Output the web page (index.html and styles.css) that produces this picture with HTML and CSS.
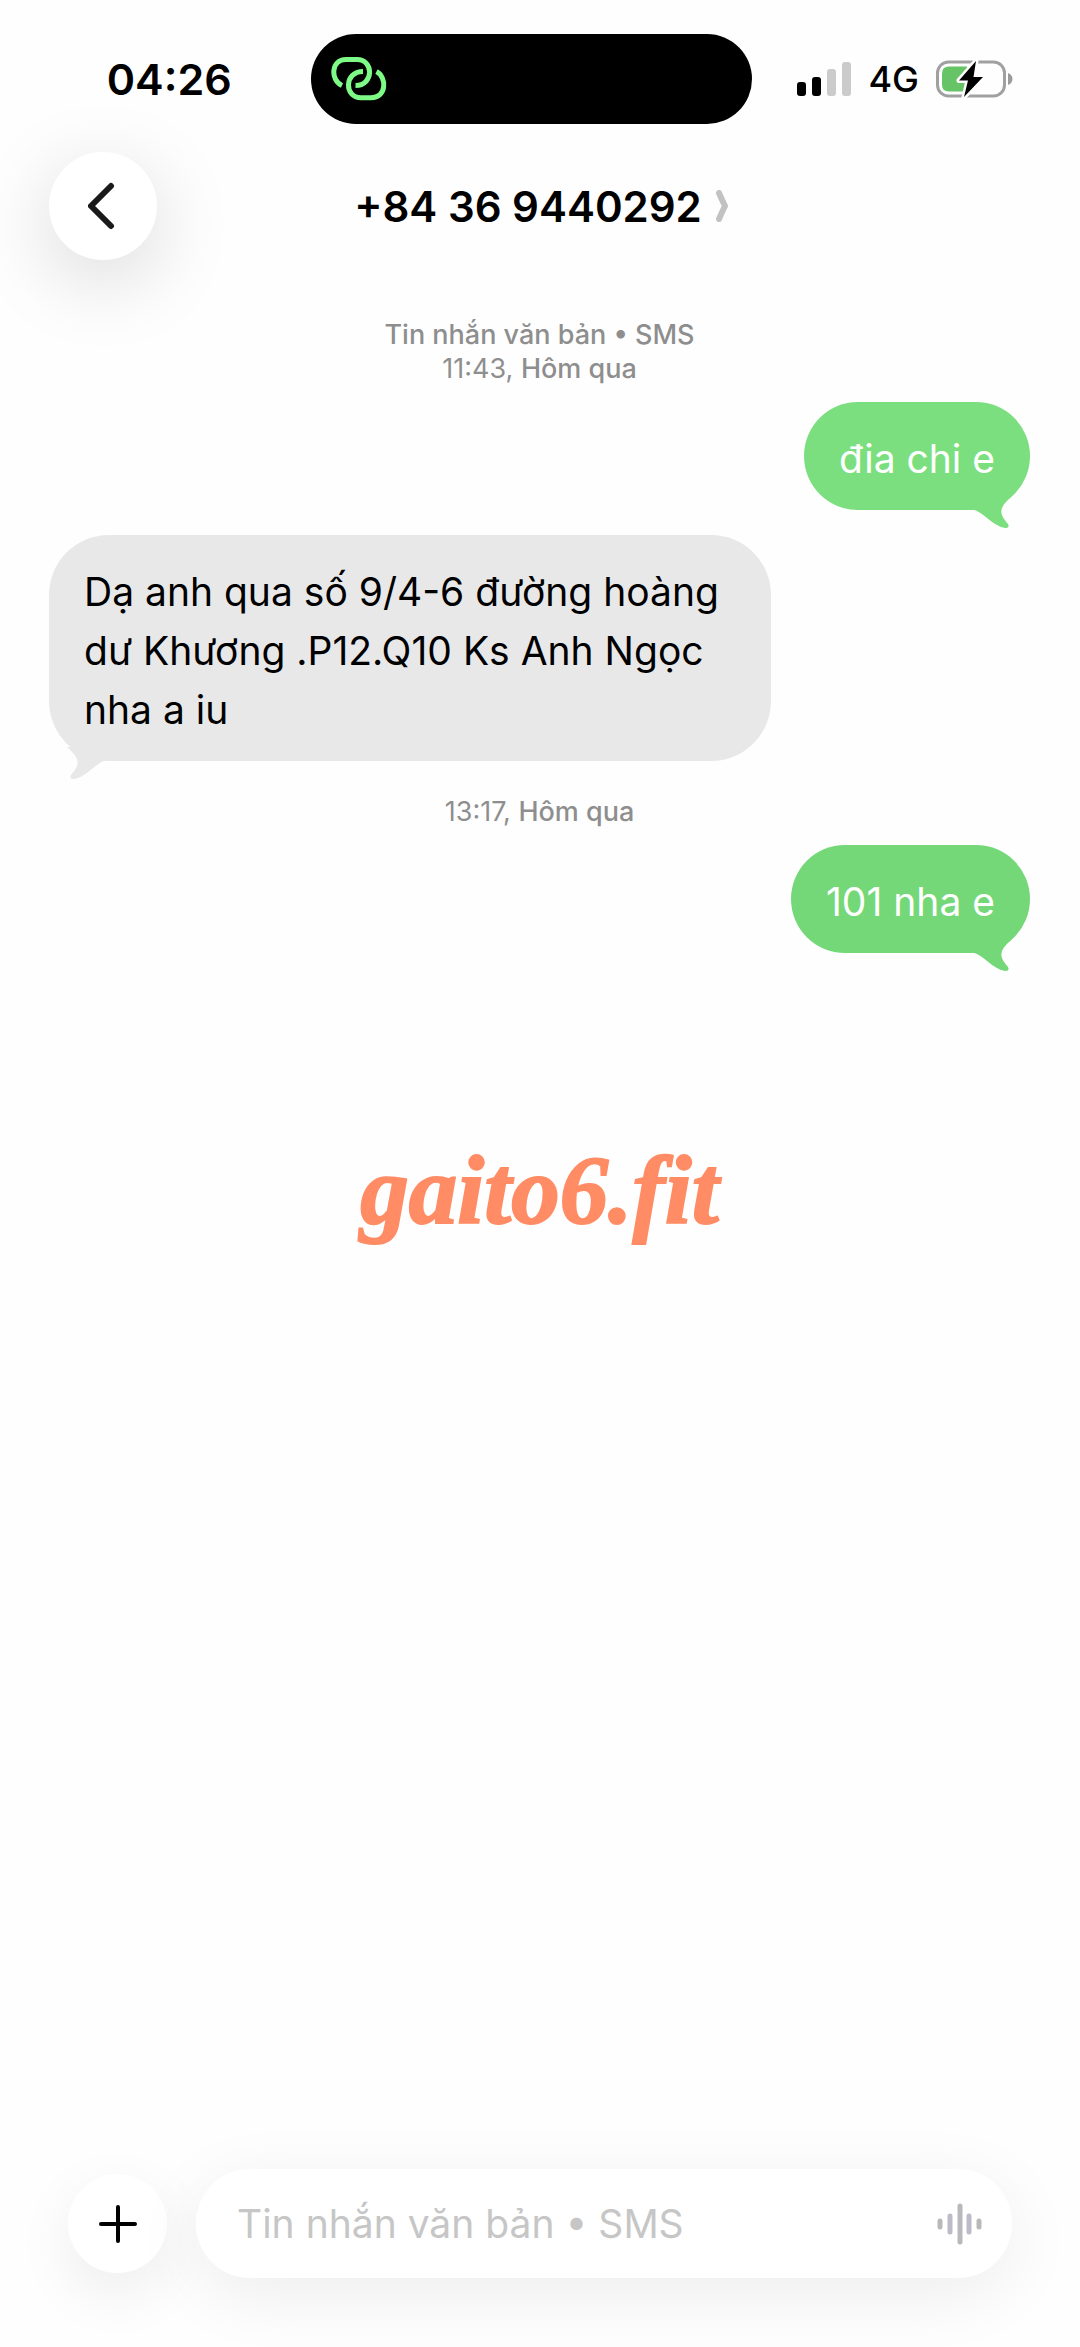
FILE: index.html
```html
<!DOCTYPE html>
<html lang="vi">
<head>
  <meta charset="utf-8">
  <meta name="viewport" content="width=device-width, initial-scale=1">
  <title>+84 36 9440292</title>
  <link rel="stylesheet" href="styles.css">
</head>
<body>
  <div class="screen">
    <div class="status">
      <time class="status-time">04:26</time>
      <div class="island">
        <svg width="56" height="44" viewBox="0 0 56 44" fill="none" stroke="#7dfb86" stroke-width="5">
          <path d="M11 28.500C-1 23 0 2.500 15 2.500H26C43 2.500 43 28.500 24.500 28.500"/>
          <path d="M32 14.500C13 14.500 13 40.700 30 40.700H40C56 40.700 56 20 45.500 14.500"/>
        </svg>
      </div>
      <div class="status-right">
        <svg width="54" height="34" viewBox="0 0 54 34">
          <rect x="0" y="20" width="9" height="14" rx="3"/>
          <rect x="15" y="15" width="9" height="19" rx="3"/>
          <rect x="30" y="7" width="9" height="27" rx="3" fill="#cbcbcb"/>
          <rect x="45" y="0" width="9" height="34" rx="3" fill="#cbcbcb"/>
        </svg>
        <span class="network">4G</span>
        <svg width="78" height="38" viewBox="0 0 78 38">
          <rect x="1.500" y="2" width="67" height="34" rx="11" fill="none" stroke="#a0a0a0" stroke-width="3"/>
          <path d="M72 13c6 2 6 10 0 12z" fill="#9a9a9a"/>
          <path d="M13 6.500H31V31.500H13Q6 31.500 6 24.500V13.500Q6 6.500 13 6.500z" fill="#66c466"/>
          <path d="M40 1L23 20.500H32L28 37L47 17H37.500z" fill="#000" stroke="#fff" stroke-width="5" stroke-linejoin="round" paint-order="stroke"/>
        </svg>
      </div>
    </div>

    <header class="header">
      <button class="round back" type="button" aria-label="Quay lại">
        <svg width="30" height="48" viewBox="0 0 30 48" fill="none" stroke="#1a1a1a" stroke-width="6" stroke-linecap="round" stroke-linejoin="round">
          <path d="M23 4L3 24L23 44"/>
        </svg>
      </button>
      <h1 class="contact">
        <span>+84 36 9440292</span>
        <svg width="13" height="32" viewBox="0 0 13 32" fill="none" stroke="#c2c2c2" stroke-width="6" stroke-linecap="round" stroke-linejoin="round">
          <path d="M3 3Q6 10 9 16Q6 22 3 29"/>
        </svg>
      </h1>
    </header>

    <main class="thread">
      <p class="stamp"><b>Tin nhắn văn bản • SMS</b><br>11:43, <b>Hôm qua</b></p>
      <div class="bubble sent">đia chi e
        <svg class="tail" width="60" height="36" viewBox="0 0 60 36"><path d="M3 13.500C14 16 22 30 35 32Q40 32 38 28C33 22 30 18 32 12C34 7 38 4 42 0H3z"/></svg>
      </div>
      <div class="bubble received">Dạ anh qua số 9/4-6 đường hoàng dư Khương .P12.Q10 Ks Anh Ngọc nha a iu
        <svg class="tail" width="60" height="36" viewBox="0 0 60 36"><path d="M3 13.500C14 16 22 30 35 32Q40 32 38 28C33 22 30 18 32 12C34 7 38 4 42 0H3z"/></svg>
      </div>
      <p class="stamp">13:17, <b>Hôm qua</b></p>
      <div class="bubble sent latest">101 nha e
        <svg class="tail" width="60" height="36" viewBox="0 0 60 36"><path d="M3 13.500C14 16 22 30 35 32Q40 32 38 28C33 22 30 18 32 12C34 7 38 4 42 0H3z"/></svg>
      </div>
      <p class="mark">gaito6.fit</p>
    </main>

    <form class="composer">
      <button class="round add" type="button" aria-label="Thêm">
        <svg width="40" height="40" viewBox="0 0 40 40" stroke="#000" stroke-width="4" stroke-linecap="round"><path d="M20 3V37M3 20H37"/></svg>
      </button>
      <div class="field">
        <input class="input" type="text" placeholder="Tin nhắn văn bản • SMS" aria-label="Tin nhắn văn bản">
        <button class="voice" type="button" aria-label="Ghi âm">
          <svg width="46" height="42" viewBox="0 0 46 42" stroke-width="5" stroke-linecap="round">
            <path d="M3 18V24M23 3V39M42 18V24" stroke="#b9b9bb"/>
            <path d="M13 13V29M32 13V29" stroke="#bcbcc8"/>
          </svg>
        </button>
      </div>
    </form>
  </div>
</body>
</html>
```
FILE: styles.css
```css
* {
  box-sizing: border-box;
}

body {
  margin: 0;
  background: #fefefe;
  color: #000;
  font-family: Inter, "Liberation Sans", sans-serif;
}

h1,
p {
  margin: 0;
}

button {
  padding: 0;
  border: 0;
  background: none;
}

svg {
  display: block;
  flex: none;
}

.screen {
  display: flex;
  flex-direction: column;
  min-height: 100vh;
  overflow: hidden;
}

.status {
  display: grid;
  grid-template-columns: 1fr 441px 1fr;
  align-items: center;
  padding: 34px 18px 0 0;
}

.status-time {
  padding-left: 28px;
  text-align: center;
  font-size: 43px;
  font-weight: 600;
}

.island {
  display: flex;
  align-items: center;
  height: 90px;
  padding-left: 20px;
  border-radius: 45px;
  background: #000;
}

.status-right {
  display: flex;
  align-items: center;
  justify-content: flex-end;
  gap: 17px;
  padding-right: 48px;
}

.network {
  font-size: 36px;
  font-weight: 500;
}

.header {
  display: grid;
  grid-template-columns: 108px 1fr 108px;
  align-items: center;
  padding: 28px 46px 0 49px;
}

.round {
  display: flex;
  align-items: center;
  justify-content: center;
  flex: none;
  border-radius: 50%;
  background: #fff;
}

.back {
  height: 108px;
  box-shadow: 0 20px 80px rgba(0, 0, 0, 0.15);
}

.contact {
  display: flex;
  align-items: center;
  justify-content: center;
  gap: 14px;
  font-size: 42px;
  font-weight: 600;
}

.thread {
  display: flex;
  flex: 1;
  flex-direction: column;
  padding: 58px 50px 0 49px;
}

.stamp {
  color: #8e8e8e;
  font-size: 27px;
  line-height: 34px;
  text-align: center;
}

.stamp b {
  font-weight: 500;
}

.bubble {
  position: relative;
  padding: 27px 35px 22px;
  font-size: 39px;
  line-height: 59px;
}

.sent {
  align-self: flex-end;
  margin-top: 16px;
  border-radius: 54px;
  background: #7bdf7f;
  color: #fff;
  fill: #7bdf7f;
}

.latest {
  background: #75d878;
  fill: #75d878;
}

.received {
  align-self: flex-start;
  width: 722px;
  max-width: 75%;
  margin: 25px 0 34px;
  border-radius: 60px;
  background: #e8e8e8;
  fill: #e8e8e8;
}

.tail {
  position: absolute;
  right: 0;
  bottom: -22px;
}

.received .tail {
  right: auto;
  left: 0;
  transform: scaleX(-1);
}

.mark {
  margin-top: 188px;
  color: #ff8c64;
  font-family: "Liberation Serif", serif;
  font-size: 97px;
  font-style: italic;
  font-weight: 700;
  line-height: 100px;
  text-align: center;
  -webkit-text-stroke: 2px #ff8c64;
}

.composer {
  display: flex;
  align-items: center;
  gap: 29px;
  padding: 0 68px 69px;
}

.add {
  width: 99px;
  height: 99px;
  box-shadow: 0 20px 60px rgba(0, 0, 0, 0.07);
}

.field {
  display: flex;
  flex: 1;
  align-items: center;
  min-width: 0;
  height: 109px;
  padding: 0 29px 0 41px;
  border-radius: 54px;
  background: #fff;
  box-shadow: 0 16px 70px rgba(0, 0, 0, 0.07);
}

.input {
  flex: 1;
  min-width: 0;
  padding: 0;
  border: 0;
  outline: 0;
  background: none;
  font: inherit;
  font-size: 39px;
}

.input::placeholder {
  color: #c6c6c6;
  opacity: 1;
}
```
